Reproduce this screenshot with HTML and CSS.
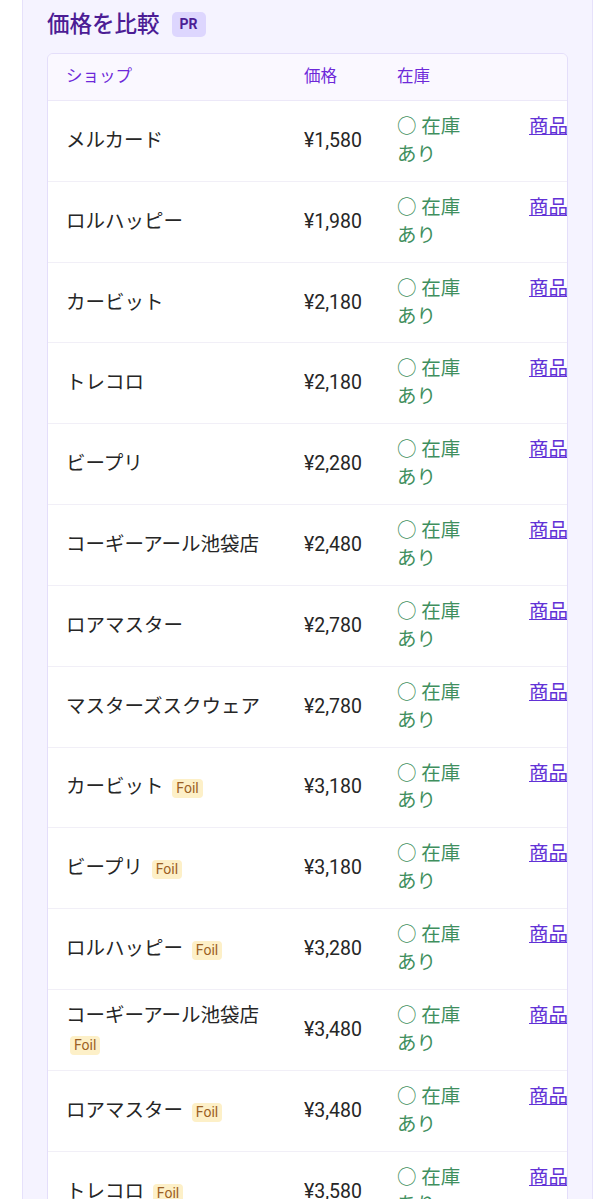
FILE: index.html
```html
<!DOCTYPE html>
<html lang="ja">
<head>
    <meta charset="UTF-8">
    <meta name="viewport" content="width=device-width, initial-scale=1.0">
    <title>価格を比較</title>
    <link rel="stylesheet" href="styles.css">
</head>
<body>
    <section class="compare">
        <h2 class="compare-title">価格を比較 <span class="pr-badge">PR</span></h2>
        <div class="table-wrap">
            <table class="price-table">
                <colgroup>
                    <col class="col-shop">
                    <col class="col-price">
                    <col class="col-stock">
                    <col class="col-link">
                </colgroup>
                <thead>
                    <tr>
                        <th>ショップ</th>
                        <th>価格</th>
                        <th>在庫</th>
                        <th></th>
                    </tr>
                </thead>
                <tbody>
                    <tr>
                        <td>メルカード</td>
                        <td>¥1,580</td>
                        <td class="stock">○ 在庫あり</td>
                        <td class="link-cell"><a href="#">商品ページ</a></td>
                    </tr>
                    <tr>
                        <td>ロルハッピー</td>
                        <td>¥1,980</td>
                        <td class="stock">○ 在庫あり</td>
                        <td class="link-cell"><a href="#">商品ページ</a></td>
                    </tr>
                    <tr>
                        <td>カービット</td>
                        <td>¥2,180</td>
                        <td class="stock">○ 在庫あり</td>
                        <td class="link-cell"><a href="#">商品ページ</a></td>
                    </tr>
                    <tr>
                        <td>トレコロ</td>
                        <td>¥2,180</td>
                        <td class="stock">○ 在庫あり</td>
                        <td class="link-cell"><a href="#">商品ページ</a></td>
                    </tr>
                    <tr>
                        <td>ビープリ</td>
                        <td>¥2,280</td>
                        <td class="stock">○ 在庫あり</td>
                        <td class="link-cell"><a href="#">商品ページ</a></td>
                    </tr>
                    <tr>
                        <td>コーギーアール池袋店</td>
                        <td>¥2,480</td>
                        <td class="stock">○ 在庫あり</td>
                        <td class="link-cell"><a href="#">商品ページ</a></td>
                    </tr>
                    <tr>
                        <td>ロアマスター</td>
                        <td>¥2,780</td>
                        <td class="stock">○ 在庫あり</td>
                        <td class="link-cell"><a href="#">商品ページ</a></td>
                    </tr>
                    <tr>
                        <td>マスターズスクウェア</td>
                        <td>¥2,780</td>
                        <td class="stock">○ 在庫あり</td>
                        <td class="link-cell"><a href="#">商品ページ</a></td>
                    </tr>
                    <tr>
                        <td>カービット <span class="foil">Foil</span></td>
                        <td>¥3,180</td>
                        <td class="stock">○ 在庫あり</td>
                        <td class="link-cell"><a href="#">商品ページ</a></td>
                    </tr>
                    <tr>
                        <td>ビープリ <span class="foil">Foil</span></td>
                        <td>¥3,180</td>
                        <td class="stock">○ 在庫あり</td>
                        <td class="link-cell"><a href="#">商品ページ</a></td>
                    </tr>
                    <tr>
                        <td>ロルハッピー <span class="foil">Foil</span></td>
                        <td>¥3,280</td>
                        <td class="stock">○ 在庫あり</td>
                        <td class="link-cell"><a href="#">商品ページ</a></td>
                    </tr>
                    <tr>
                        <td>コーギーアール池袋店 <span class="foil">Foil</span></td>
                        <td>¥3,480</td>
                        <td class="stock">○ 在庫あり</td>
                        <td class="link-cell"><a href="#">商品ページ</a></td>
                    </tr>
                    <tr>
                        <td>ロアマスター <span class="foil">Foil</span></td>
                        <td>¥3,480</td>
                        <td class="stock">○ 在庫あり</td>
                        <td class="link-cell"><a href="#">商品ページ</a></td>
                    </tr>
                    <tr>
                        <td>トレコロ <span class="foil">Foil</span></td>
                        <td>¥3,580</td>
                        <td class="stock">○ 在庫あり</td>
                        <td class="link-cell"><a href="#">商品ページ</a></td>
                    </tr>
                </tbody>
            </table>
        </div>
    </section>
</body>
</html>
```

FILE: styles.css
```css
body {
    margin: 0;
    padding: 0 22px;
    background-color: #fff;
    font-family: Roboto, "Noto Sans CJK JP", sans-serif;
}

.compare {
    background-color: #f5f3ff;
    border: 1px solid #e6e1fb;
    border-top: none;
    padding: 8px 24px 24px;
}

.compare-title {
    display: flex;
    align-items: center;
    gap: 12px;
    margin: 0 0 13px;
    font-size: 22.5px;
    line-height: 32px;
    font-weight: 500;
    color: #4c1d95;
}

.pr-badge {
    font-size: 14px;
    line-height: 17px;
    font-weight: 700;
    padding: 4px 8px;
    background-color: #ddd6fe;
    border-radius: 5px;
    color: #4c1d95;
}

.table-wrap {
    background-color: #fff;
    border: 1px solid #e4defa;
    border-radius: 6px;
    overflow-x: auto;
}

.price-table {
    border-collapse: collapse;
    table-layout: fixed;
    width: 600px;
}

.col-shop { width: 238px; }
.col-price { width: 93px; }
.col-stock { width: 132px; }
.col-link { width: 137px; }

th {
    text-align: left;
    font-size: 16.5px;
    line-height: 22px;
    font-weight: 400;
    color: #6d28d9;
    background-color: #faf8ff;
    padding: 12px 18px;
    border-bottom: 1px solid #ece8f8;
}

td {
    padding: 12px 18px;
    font-size: 19.5px;
    line-height: 27.9px;
    color: #262626;
    vertical-align: middle;
    border-bottom: 1px solid #f1eff7;
}

.stock {
    color: #3f8f5e;
    padding-right: 40px;
}

.link-cell {
    vertical-align: top;
    white-space: nowrap;
}

.link-cell a {
    color: #6232d6;
    text-decoration: underline;
}

.foil {
    display: inline-block;
    margin-left: 4px;
    padding: 0 4px;
    font-size: 14px;
    line-height: 19px;
    color: #9c5f24;
    background-color: #fdf0c8;
    border-radius: 4px;
    vertical-align: 0;
}
```
